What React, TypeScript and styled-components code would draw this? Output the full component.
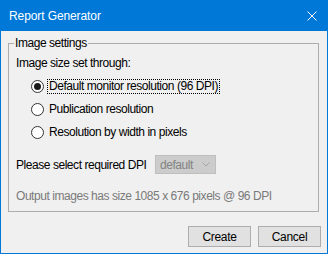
import React from "react";
import styled, { createGlobalStyle } from "styled-components";

const GlobalStyle = createGlobalStyle`
  html, body { margin: 0; padding: 0; background: #f0f0f0; }
  * { box-sizing: border-box; }
`;

const FONT = `"Liberation Sans", Arial, sans-serif`;

const Window = styled.div`
  width: 328px;
  height: 254px;
  border: 1px solid #0078d7;
  display: flex;
  flex-direction: column;
  font-family: ${FONT};
  font-size: 12px;
  letter-spacing: -0.45px;
  color: #000;
  background: #f0f0f0;
`;

const TitleBar = styled.div`
  height: 30px;
  flex: none;
  background: #0078d7;
  color: #fff;
  display: flex;
  align-items: center;
  justify-content: space-between;
  padding: 0 10px 0 8px;
  letter-spacing: -0.1px;
`;

const Title = styled.span`
  line-height: 15px;
`;

const Body = styled.div`
  flex: 1;
  display: flex;
  flex-direction: column;
  padding: 5px 8px 0 7px;
`;

const Group = styled.fieldset`
  margin: 0;
  min-inline-size: 0;
  border: 1px solid #adadad;
  padding: 0 7px 7px 7px;
  display: flex;
  flex-direction: column;
`;

const Legend = styled.legend`
  line-height: 15px;
  padding: 0 1px;
  margin-left: -2px;
`;

const Text = styled.div<{ $top?: number; $muted?: boolean }>`
  line-height: 15px;
  margin-top: ${(p) => p.$top ?? 0}px;
  color: ${(p) => (p.$muted ? "#7a7a7a" : "#000")};
  white-space: nowrap;
`;

const RadioList = styled.div`
  display: flex;
  flex-direction: column;
  gap: 8px;
  margin: 8px 0 0 15px;
`;

const RadioRow = styled.label`
  display: flex;
  align-items: center;
  height: 15px;
`;

const RadioCircle = styled.span<{ $checked?: boolean }>`
  width: 13px;
  height: 13px;
  border: 1px solid #333;
  border-radius: 50%;
  background: #fff;
  display: flex;
  align-items: center;
  justify-content: center;
  flex: none;
  &::after {
    content: "";
    width: 7px;
    height: 7px;
    border-radius: 50%;
    background: ${(p) => (p.$checked ? "#1a1a1a" : "transparent")};
  }
`;

const RadioLabel = styled.span<{ $focused?: boolean }>`
  margin-left: 3px;
  line-height: 13px;
  padding: 0 1px;
  border: 1px dotted ${(p) => (p.$focused ? "#000" : "transparent")};
  white-space: nowrap;
`;

const DpiRow = styled.div`
  display: flex;
  align-items: center;
  margin-top: 15px;
  height: 19px;
`;

const DpiLabel = styled.span`
  width: 139px;
  flex: none;
  white-space: nowrap;
`;

const Select = styled.div`
  width: 61px;
  height: 19px;
  background: #cccccc;
  border: 1px solid #bfbfbf;
  color: #838383;
  display: flex;
  align-items: center;
  justify-content: space-between;
  padding: 0 5px 0 4px;
`;

const ButtonRow = styled.div`
  display: flex;
  justify-content: flex-end;
  gap: 7px;
  margin: 14px -2px 0 0;
`;

const Button = styled.button`
  width: 63px;
  height: 21px;
  background: #e1e1e1;
  border: 1px solid #adadad;
  font-family: ${FONT};
  font-size: 12px;
  letter-spacing: -0.3px;
  color: #000;
  padding: 0;
`;

const Radio = ({
  label,
  checked,
  focused,
}: {
  label: string;
  checked?: boolean;
  focused?: boolean;
}) => (
  <RadioRow>
    <RadioCircle $checked={checked} />
    <RadioLabel $focused={focused}>{label}</RadioLabel>
  </RadioRow>
);

export default function App() {
  return (
    <>
      <GlobalStyle />
      <Window>
        <TitleBar>
          <Title>Report Generator</Title>
          <svg width="10" height="10" viewBox="0 0 10 10">
            <path d="M0.5 0.5 L9.5 9.5 M9.5 0.5 L0.5 9.5" stroke="#fff" strokeWidth="1" />
          </svg>
        </TitleBar>
        <Body>
          <Group>
            <Legend>Image settings</Legend>
            <Text $top={5}>Image size set through:</Text>
            <RadioList>
              <Radio label="Default monitor resolution (96 DPI)" checked focused />
              <Radio label="Publication resolution" />
              <Radio label="Resolution by width in pixels" />
            </RadioList>
            <DpiRow>
              <DpiLabel>Please select required DPI</DpiLabel>
              <Select>
                <span>default</span>
                <svg width="8" height="5" viewBox="0 0 8 5">
                  <path d="M0.5 0.5 L4 4 L7.5 0.5" stroke="#a6a6a6" fill="none" strokeWidth="1" />
                </svg>
              </Select>
            </DpiRow>
            <Text $top={15} $muted>
              Output images has size 1085 x 676 pixels @ 96 DPI
            </Text>
          </Group>
          <ButtonRow>
            <Button>Create</Button>
            <Button>Cancel</Button>
          </ButtonRow>
        </Body>
      </Window>
    </>
  );
}
